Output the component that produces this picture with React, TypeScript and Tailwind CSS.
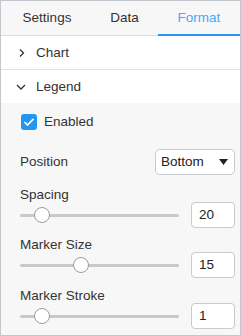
import React from "react";

function Slider({ pos }: { pos: number }) {
  return (
    <div className="relative w-[159px] h-[16px] flex items-center">
      <div className="w-full h-[3px] rounded-full bg-[#c7c9ce]" />
      <div
        className="absolute top-0 w-[16px] h-[16px] rounded-full bg-white border border-[#9a9ca0]"
        style={{ left: pos - 8 }}
      />
    </div>
  );
}

function SliderRow({ label, pos, value }: { label: string; pos: number; value: string }) {
  return (
    <div className="flex flex-col">
      <div className="pl-[19px] text-[13.5px] leading-[16px] text-[#333]">{label}</div>
      <div className="flex items-center mt-[-1px]">
        <div className="pl-[19px]">
          <Slider pos={pos} />
        </div>
        <div className="ml-[12px] w-[44px] h-[26px] rounded-[4px] border border-[#c8cacd] bg-white flex items-center pl-[7px] text-[13.5px] text-[#222]">
          {value}
        </div>
      </div>
    </div>
  );
}

export default function App() {
  return (
    <div
      className="w-[241px] h-[336px] border border-[#c3c6cc] bg-[#f7f7f8] overflow-hidden flex flex-col"
      style={{ fontFamily: '"Liberation Sans", Arial, sans-serif' }}
    >
      <div className="h-[35px] bg-[#f7f7f7] border-b border-[#dcdcde] flex text-[13.5px] shrink-0">
        <div className="w-[90px] flex items-center justify-center text-[#333] pl-[2px]">Settings</div>
        <div className="w-[67px] flex items-center justify-center text-[#333]">Data</div>
        <div className="flex-1 relative flex items-center justify-center text-[#4ea6f5]">
          Format
          <div className="absolute left-0 right-0 bottom-[-1px] h-[2px] bg-[#2d96f3]" />
        </div>
      </div>
      <div className="h-[34px] bg-white border-b border-[#e1e1e3] flex items-center shrink-0 pt-[1px]">
        <svg width="8" height="10" viewBox="0 0 8 10" className="ml-[17px]">
          <path d="M2 1.5 L5.5 5 L2 8.5" fill="none" stroke="#333" strokeWidth="1.3" />
        </svg>
        <span className="ml-[10px] text-[13.5px] text-[#333]">Chart</span>
      </div>
      <div className="h-[33px] bg-white flex items-center shrink-0 pt-[1px]">
        <svg width="10" height="8" viewBox="0 0 10 8" className="ml-[15px]">
          <path d="M1 2 L5 6 L9 2" fill="none" stroke="#333" strokeWidth="1.3" />
        </svg>
        <span className="ml-[10px] text-[13.5px] text-[#333]">Legend</span>
      </div>
      <div className="flex flex-col">
        <div className="flex items-center mt-[9px] pl-[20px]">
          <div className="w-[16px] h-[16px] rounded-[3px] bg-[#2196f3] flex items-center justify-center">
            <svg width="12" height="10" viewBox="0 0 12 10">
              <path d="M1.5 5 L4.5 8 L10.5 1.8" fill="none" stroke="white" strokeWidth="1.7" />
            </svg>
          </div>
          <span className="ml-[7px] text-[13.5px] text-[#333]">Enabled</span>
        </div>
        <div className="flex items-center justify-between mt-[17px] pl-[19px] pr-[5px]">
          <span className="text-[13.5px] text-[#333]">Position</span>
          <div className="w-[80px] h-[26px] rounded-[5px] border border-[#c8cacd] bg-white flex items-center justify-between pl-[5px] pr-[6px] text-[13.5px] text-[#222]">
            <span>Bottom</span>
            <svg width="9" height="6" viewBox="0 0 9 6">
              <path d="M0 0 L9 0 L4.5 6 Z" fill="#222" />
            </svg>
          </div>
        </div>
        <div className="mt-[12px]">
          <SliderRow label="Spacing" pos={22} value="20" />
        </div>
        <div className="mt-[9px]">
          <SliderRow label="Marker Size" pos={61} value="15" />
        </div>
        <div className="mt-[10px]">
          <SliderRow label="Marker Stroke" pos={22} value="1" />
        </div>
      </div>
    </div>
  );
}
